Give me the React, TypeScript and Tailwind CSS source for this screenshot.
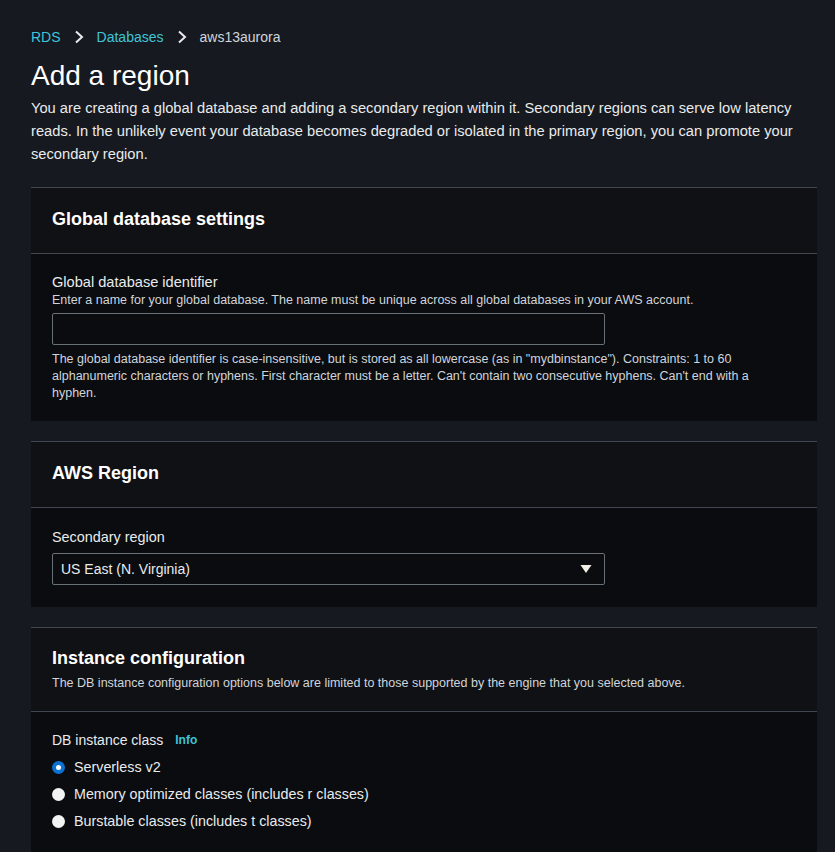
import React from "react";

const Panel = ({title, desc, children}: {title: string; desc?: string; children: React.ReactNode}) => (
    <div className="border-t border-[#414750] bg-[#0a0c0f]">
        <div className={`bg-[#0f1114] border-b border-[#414750] px-[21px] ${desc ? "pt-[17px] pb-[20px]" : "h-[66px] flex items-center pb-[3px]"}`}>
            <h2 className="text-[18px] font-bold text-white leading-[26px]">{title}</h2>
            {desc && <p className="text-[12.5px] text-[#d1d5db] leading-[16px] mt-[4px]">{desc}</p>}
        </div>
        {children}
    </div>
);

const Radio = ({checked, label}: {checked?: boolean; label: string}) => (
    <div className="flex items-center gap-[9px] h-[27px]">
        {checked ? (
            <span className="w-[13px] h-[13px] rounded-full bg-[#0972d3] flex items-center justify-center">
                <span className="w-[5px] h-[5px] rounded-full bg-white"/>
            </span>
        ) : (
            <span className="w-[13px] h-[13px] rounded-full bg-[#f2f3f3]"/>
        )}
        <span className="text-[14.3px] text-[#e9ebed]">{label}</span>
    </div>
);

export default function App() {
    return (
        <div className="min-h-screen bg-[#16191f] pl-[31px] pr-[18px] pt-[26px] pb-[30px]" style={{fontFamily: '"Liberation Sans", Arial, sans-serif'}}>
            {/* Breadcrumb */}
            <div className="flex items-center text-[14px] leading-[22px]">
                <span className="text-[#40c4d8]">RDS</span>
                <svg width="12" height="14" viewBox="0 0 12 14" className="mx-[12px]">
                    <path d="M3 1.5 L9 7 L3 12.5" stroke="#e9ebed" strokeWidth="2" fill="none"/>
                </svg>
                <span className="text-[#40c4d8]">Databases</span>
                <svg width="12" height="14" viewBox="0 0 12 14" className="mx-[12px]">
                    <path d="M3 1.5 L9 7 L3 12.5" stroke="#e9ebed" strokeWidth="2" fill="none"/>
                </svg>
                <span className="text-[#d1d5db]">aws13aurora</span>
            </div>

            <h1 className="text-[28px] text-white leading-[36px] mt-[10px]">Add a region</h1>
            <p className="text-[14.7px] text-[#e9ebed] leading-[23px] mt-[3px] max-w-[775px]">
                You are creating a global database and adding a secondary region within it. Secondary regions can serve low latency reads. In the unlikely event your database becomes degraded or isolated in the primary region, you can promote your secondary region.
            </p>

            <div className="flex flex-col gap-[20px] mt-[21px]">
                <Panel title="Global database settings">
                    <div className="px-[21px] pt-[19px] pb-[19px]">
                        <div className="text-[14.6px] text-[#e9ebed] leading-[18px]">Global database identifier</div>
                        <div className="text-[12.5px] text-[#d1d5db] leading-[16px] mt-[1px]">Enter a name for your global database. The name must be unique across all global databases in your AWS account.</div>
                        <input className="mt-[5px] w-[553px] h-[32px] rounded-[2px] border border-[#687078] bg-[#0a0c0f] outline-none px-2 text-white"/>
                        <div className="text-[12.5px] text-[#d1d5db] leading-[17px] mt-[6px] max-w-[720px]">
                            The global database identifier is case-insensitive, but is stored as all lowercase (as in "mydbinstance"). Constraints: 1 to 60 alphanumeric characters or hyphens. First character must be a letter. Can't contain two consecutive hyphens. Can't end with a hyphen.
                        </div>
                    </div>
                </Panel>

                <Panel title="AWS Region">
                    <div className="px-[21px] pt-[20px] pb-[22px]">
                        <div className="text-[14.4px] text-[#e9ebed] leading-[18px]">Secondary region</div>
                        <div className="mt-[7px] w-[553px] h-[32px] rounded-[2px] border border-[#687078] flex items-center justify-between pl-[8px] pr-[12px]">
                            <span className="text-[14px] text-[#e9ebed]">US East (N. Virginia)</span>
                            <svg width="12" height="10" viewBox="0 0 12 10">
                                <path d="M0.5 1 L11.5 1 L6 9 Z" fill="#f2efe6"/>
                            </svg>
                        </div>
                    </div>
                </Panel>

                <Panel title="Instance configuration" desc="The DB instance configuration options below are limited to those supported by the engine that you selected above.">
                    <div className="px-[21px] pt-[18px] pb-[20px]">
                        <div className="flex items-center gap-[12px] text-[14px] leading-[20px]">
                            <span className="text-[#e9ebed]">DB instance class</span>
                            <span className="text-[#40c4d8] text-[12px] font-bold">Info</span>
                        </div>
                        <div className="mt-[4px]">
                            <Radio checked label="Serverless v2"/>
                            <Radio label="Memory optimized classes (includes r classes)"/>
                            <Radio label="Burstable classes (includes t classes)"/>
                        </div>
                    </div>
                </Panel>
            </div>
        </div>
    );
}
